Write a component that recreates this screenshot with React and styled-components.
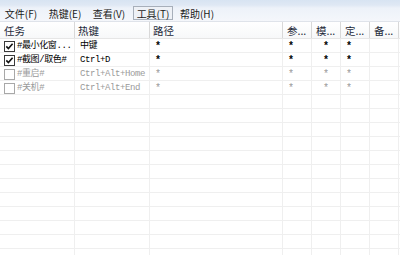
import React from "react";
import styled, { createGlobalStyle } from "styled-components";

const GlobalStyle = createGlobalStyle`
  html, body { margin: 0; padding: 0; background: #fff; }
  body { font-family: "Noto Sans CJK SC", "Liberation Sans", sans-serif; overflow: hidden; }
  #root { width: 400px; height: 255px; }
`;

const Window = styled.div`
  width: 400px;
  height: 255px;
  display: flex;
  flex-direction: column;
  overflow: hidden;
  background: #fff;
`;

const MenuBar = styled.div`
  height: 22px;
  flex: none;
  display: flex;
  align-items: flex-end;
  gap: 4px;
  padding: 0 0 1px 1px;
  box-sizing: border-box;
  background: linear-gradient(#d8e4f2 0px, #dfe8f4 5px, #edf2f9 8px, #f5f7fb 22px);
  border-bottom: 1px solid #dfe3ea;
`;

const MenuItem = styled.div`
  width: 40px;
  height: 14px;
  box-sizing: border-box;
  display: flex;
  align-items: center;
  justify-content: center;
  padding-top: 2px;
  font-size: 10px;
  line-height: 12px;
  color: #1b1b1b;
  border: 1px solid ${(p) => (p.$pressed ? "#a7afba" : "transparent")};
  background: ${(p) => (p.$pressed ? "#eef1f6" : "transparent")};
  white-space: nowrap;
`;

const COLS = "75px 75px 133px 29px 29px 29px 29px 1fr";

const HeaderRow = styled.div`
  display: grid;
  grid-template-columns: ${COLS};
  height: 17px;
  flex: none;
  box-sizing: border-box;
  background: linear-gradient(#ffffff, #f7f8f9);
  border-bottom: 1px solid #e6e6e6;
`;

const HeaderCell = styled.div`
  box-sizing: border-box;
  border-right: ${(p) => (p.$last ? "none" : "1px solid #d8d8d8")};
  padding-left: ${(p) => p.$pad}px;
  padding-top: 1px;
  font-size: 10.5px;
  line-height: 16px;
  color: #1e2a3a;
  white-space: nowrap;
  overflow: hidden;
`;

const Body = styled.div`
  flex: 1;
  overflow: hidden;
`;

const Row = styled.div`
  display: grid;
  grid-template-columns: ${COLS};
  height: 14px;
  color: ${(p) => (p.$disabled ? "#9a9a9a" : "#000")};
`;

const Cell = styled.div`
  box-sizing: border-box;
  height: 14px;
  border-right: ${(p) => (p.$last ? "none" : "1px solid #efefef")};
  border-bottom: 1px solid #efefef;
  padding-left: ${(p) => p.$pad || 0}px;
  padding-top: 1px;
  display: flex;
  align-items: center;
  gap: 2px;
  font-family: "Liberation Mono", "Noto Sans CJK SC", monospace;
  font-size: 9px;
  letter-spacing: -0.4px;
  line-height: 12px;
  white-space: nowrap;
  overflow: hidden;
`;

const Star = styled.span`
  font-family: "Liberation Mono", monospace;
  font-size: 10px;
  font-weight: ${(p) => (p.$disabled ? 400 : 700)};
  line-height: 12px;
  position: relative;
  top: 1px;
`;

const CheckBox = ({ checked }) => (
  <svg width="11" height="11" viewBox="0 0 11 11" style={{ flex: "none" }}>
    <rect
      x="0.5"
      y="0.5"
      width="10"
      height="10"
      fill="#fff"
      stroke={checked ? "#3a3a3a" : "#a8a8a8"}
    />
    {checked && (
      <path d="M2.3 5.4 L4.4 7.6 L8.6 2.8" fill="none" stroke="#111" strokeWidth="1.6" />
    )}
  </svg>
);

const headers = [
  { t: "任务", pad: 4 },
  { t: "热键", pad: 3 },
  { t: "路径", pad: 3 },
  { t: "参...", pad: 4 },
  { t: "模...", pad: 4 },
  { t: "定...", pad: 4 },
  { t: "备...", pad: 4 },
  { t: "", pad: 0, last: true },
];

const rows = [
  { name: "#最小化窗...", key: "中键", on: true },
  { name: "#截图/取色#", key: "Ctrl+D", on: true },
  { name: "#重启#", key: "Ctrl+Alt+Home", on: false },
  { name: "#关机#", key: "Ctrl+Alt+End", on: false },
];

const EMPTY = 13;

export default function App() {
  return (
    <>
      <GlobalStyle />
      <Window>
        <MenuBar>
          <MenuItem>文件(F)</MenuItem>
          <MenuItem>热键(E)</MenuItem>
          <MenuItem>查看(V)</MenuItem>
          <MenuItem $pressed>工具(T)</MenuItem>
          <MenuItem>帮助(H)</MenuItem>
        </MenuBar>
        <HeaderRow>
          {headers.map((h, i) => (
            <HeaderCell key={i} $pad={h.pad} $last={h.last}>
              {h.t}
            </HeaderCell>
          ))}
        </HeaderRow>
        <Body>
          {rows.map((r, i) => {
            const d = !r.on;
            return (
              <Row key={i} $disabled={d}>
                <Cell $pad={4}>
                  <CheckBox checked={r.on} />
                  <span>{r.name}</span>
                </Cell>
                <Cell $pad={5}>{r.key}</Cell>
                <Cell $pad={5}><Star $disabled={d}>*</Star></Cell>
                <Cell $pad={5}><Star $disabled={d}>*</Star></Cell>
                <Cell $pad={11}><Star $disabled={d}>*</Star></Cell>
                <Cell $pad={5}><Star $disabled={d}>*</Star></Cell>
                <Cell />
                <Cell $last />
              </Row>
            );
          })}
          {Array.from({ length: EMPTY }).map((_, i) => (
            <Row key={"e" + i}>
              <Cell />
              <Cell />
              <Cell />
              <Cell />
              <Cell />
              <Cell />
              <Cell />
              <Cell $last />
            </Row>
          ))}
        </Body>
      </Window>
    </>
  );
}
